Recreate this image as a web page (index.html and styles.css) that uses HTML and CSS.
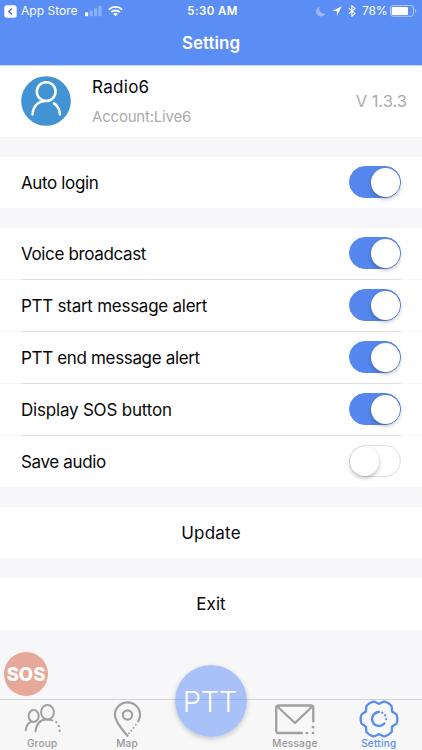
FILE: index.html
```html
<!DOCTYPE html>
<html lang="en">
<head>
<meta charset="utf-8">
<meta name="viewport" content="width=device-width, initial-scale=1">
<title>Setting</title>
<link rel="stylesheet" href="styles.css">
</head>
<body>
<div class="app">
  <header class="header">
    <div class="status">
      <div class="status-left">
        <svg width="13" height="13" viewBox="0 0 13 13"><rect x=".3" y=".3" width="12.4" height="12.4" rx="2.6" fill="#fff"/><path d="M7.8 3.5 4.8 6.5l3 3" fill="none" stroke="#4a73c6" stroke-width="1.4"/></svg>
        <span class="back">App Store</span>
        <svg class="signal" width="17" height="12" viewBox="0 0 17 12" fill="#fff"><rect y="7.3" width="3.2" height="4" rx=".8"/><g opacity=".3"><rect x="4.5" y="5.4" width="3.2" height="5.9" rx=".8"/><rect x="9" y="3.3" width="3.2" height="8" rx=".8"/><rect x="13.4" y=".9" width="3.2" height="10.4" rx=".8"/></g></svg>
        <svg class="wifi" width="15" height="12" viewBox="0 0 15 12" fill="none" stroke="#fff" stroke-width="1.9"><path d="M.8 4.6a9.5 9.5 0 0 1 13.4 0M3.2 7.2a6.1 6.1 0 0 1 8.6 0"/><path d="M7.5 11.2 5.2 8.9a3.2 3.2 0 0 1 4.6 0Z" fill="#fff" stroke="none"/></svg>
      </div>
      <span class="time">5:30 AM</span>
      <div class="status-right">
        <svg width="10" height="11" viewBox="0 0 10 11"><path d="M3.5.8A4.9 4.9 0 1 0 9.4 7.4 5 5 0 0 1 3.5.8Z" fill="#fff" opacity=".38"/></svg>
        <svg class="arrow" width="10" height="10" viewBox="0 0 10 10"><path d="M9.7.3.3 4.9h4.6v4.8Z" fill="#fff"/></svg>
        <svg class="bt" width="8" height="12" viewBox="0 0 8 12"><path d="M.8 3.2 7 8.6 3.9 11.2V.8L7 3.4.8 8.8" fill="none" stroke="#fff" stroke-width="1.1"/></svg>
        <span class="pct">78%</span>
        <svg class="battery" width="27" height="12" viewBox="0 0 27 12"><rect x=".5" y=".5" width="23" height="10.8" rx="2.6" fill="none" stroke="#fff" opacity=".5"/><rect x="1.7" y="1.9" width="16.3" height="8" rx="1" fill="#fff"/><path d="M25 4.1q1.5.6 1.5 1.8T25 7.7Z" fill="#fff" opacity=".45"/></svg>
      </div>
    </div>
    <h1 class="title">Setting</h1>
  </header>

  <main class="content">
    <section class="profile">
      <svg class="avatar" width="50" height="50" viewBox="0 0 50 50"><circle cx="25" cy="25" r="24.8" fill="#4293d3"/><g fill="none" stroke="#fff" stroke-width="2.5" stroke-linecap="round"><circle cx="25.2" cy="15.6" r="9.4"/><path d="M11.5 38.4C12 31.5 16 25.5 23.5 24.9M33 27.4c3.7 2.4 5.6 6 6 11"/></g></svg>
      <div class="who"><div class="name">Radio6</div><div class="account">Account:Live6</div></div>
      <span class="version">V 1.3.3</span>
    </section>

    <section class="group">
      <div class="row single"><span>Auto login</span><span class="switch on"></span></div>
    </section>

    <section class="group list">
      <div class="row"><span>Voice broadcast</span><span class="switch on"></span></div>
      <div class="row"><span class="start">PTT start message alert</span><span class="switch on"></span></div>
      <div class="row"><span class="end">PTT end message alert</span><span class="switch on"></span></div>
      <div class="row"><span class="display">Display SOS button</span><span class="switch on"></span></div>
      <div class="row last"><span>Save audio</span><span class="switch"></span></div>
    </section>

    <section class="group action"><span class="update">Update</span></section>
    <section class="group action"><span class="exit">Exit</span></section>
  </main>

  <div class="sos"><span>SOS</span></div>

  <nav class="tabs">
    <div class="tab">
      <svg width="38" height="34" viewBox="0 0 38 34" fill="none" stroke="#a0a0a1" stroke-width="2" stroke-linecap="round"><ellipse cx="10.7" cy="12" rx="5" ry="6"/><ellipse cx="24.5" cy="8.2" rx="6.4" ry="7.2"/><path d="M2.8 26.3c.2-3.7 1.6-6.4 4.7-8.2M12.6 27.3c.3-6.6 4.5-11.7 10.6-11.7 2.5 0 4.1.2 6 .8"/><path d="M33.3 18.2v.1M35.8 22v.1M36.7 26.7v.1" stroke-width="2.3"/></svg>
      <span>Group</span>
    </div>
    <div class="tab map">
      <svg width="29" height="37" viewBox="0 0 30 38" fill="none" stroke="#a0a0a1" stroke-width="2.3" stroke-linecap="round"><path d="M15 36C10.5 30.5 2 22 2 14.2a13 13 0 0 1 26 0c0 2.6-.8 4.7-2 6.7"/><circle cx="15" cy="14.4" r="4.8"/><path d="M23.6 24.3v.1M21.3 27.4v.1M18.8 30.5v.1M16.4 33.4v.1" stroke-width="1.9"/></svg>
      <span>Map</span>
    </div>
    <div class="tab"></div>
    <div class="tab message">
      <svg width="42" height="34" viewBox="0 0 42 34" fill="none" stroke="#a0a0a1" stroke-width="2.3" stroke-linecap="round" stroke-linejoin="round"><path d="M28 30H4.7Q2.2 30 2.2 27.5V5Q2.2 2.5 4.7 2.5h32.1Q39.3 2.5 39.3 5v13.5M3.3 3.5 21 20 38.3 3.5"/><path d="M39 24v.1M32.8 30h.1M39 30h.1" stroke-width="2.7"/></svg>
      <span>Message</span>
    </div>
    <div class="tab active">
      <svg width="40" height="38" viewBox="-20 -19 40 38" fill="none" stroke="#5a8cf0" stroke-width="2.3" stroke-linecap="round">
        <defs><path id="lobe" d="M13.25-7.65C14.35-5.75 17-6 17.8-3.8Q18.9 0 17.8 3.8C17 6 14.35 5.75 13.25 7.65"/></defs>
        <use href="#lobe"/><use href="#lobe" transform="rotate(60)"/><use href="#lobe" transform="rotate(120)"/><use href="#lobe" transform="rotate(180)"/><use href="#lobe" transform="rotate(240)"/><use href="#lobe" transform="rotate(300)"/>
        <path d="M0-7a7 7 0 1 0 5.4 11.5"/><path d="M3.3-6.4v.1M6.2-3.8v.1M7.2.1v.1" stroke-width="2.2"/>
      </svg>
      <span>Setting</span>
    </div>
  </nav>
  <div class="ptt"><span>PTT</span></div>
</div>
</body>
</html>
```
FILE: styles.css
```css
* { box-sizing: border-box; }
body { margin: 0; font-family: Inter, "Liberation Sans", sans-serif; color: #080808; }
svg { display: block; flex: none; }
.app { position: relative; width: 422px; height: 750px; display: flex; flex-direction: column; overflow: hidden; background: #f7f7fa; }
.header { height: 66px; flex: none; background: #5b8ef5; border-bottom: 1px solid #c3d5fc; color: #fff; }
.status { height: 22px; display: grid; grid-template-columns: 1fr auto 1fr; align-items: center; padding: 0 5px 0 4px; font-size: 12px; line-height: 22px; }
.status-left, .status-right { display: flex; align-items: center; }
.status-right { justify-content: flex-end; }
.back { margin-left: 4px; width: 58px; white-space: nowrap; letter-spacing: .02px; }
.signal { margin-left: 6px; margin-top: -1px; }
.wifi { margin-left: 6px; margin-top: -1px; }
.time { font-weight: 600; font-size: 11.5px; letter-spacing: .4px; padding-left: 4px; }
.arrow { margin-left: 6px; }
.bt { margin-left: 6px; }
.pct { margin-left: 6px; width: 25px; white-space: nowrap; letter-spacing: -.15px; }
.battery { margin-left: 3px; margin-top: -1px; }
.title { margin: 0; padding-top: 9px; text-align: center; font-size: 17px; line-height: 24px; font-weight: 600; letter-spacing: 0; }
.content { display: flex; flex-direction: column; gap: 20px; font-size: 17px; }
.profile { height: 71px; display: flex; align-items: center; padding: 0 15px 2px 21px; background: #fff; }
.who { margin-left: 21px; flex: 1; padding-top: 1px; }
.name { line-height: 24px; letter-spacing: .3px; }
.account { margin-top: 7px; font-size: 15px; line-height: 22px; letter-spacing: -.2px; color: #ababab; }
.version { color: #aaa; font-size: 16.5px; padding-top: 1px; }
.group { background: #fff; flex: none; }
.row { position: relative; height: 52px; display: flex; align-items: center; justify-content: space-between; padding: 0 21px; letter-spacing: -.36px; }
.row.single { height: 51.3px; }
.row.last { height: 50.7px; }
.start { letter-spacing: -.26px; }
.end { letter-spacing: -.34px; }
.display { letter-spacing: -.2px; }
.list .row:not(:last-child)::after { content: ""; position: absolute; left: 0; right: 0; bottom: 0; height: 1px; background: linear-gradient(to right, #f7f7f7 21px, #dedede 21px, #dedede 401px, #f7f7f7 401px); }
.switch { width: 52px; height: 32px; border-radius: 16px; padding: 1.5px; border: 1.5px solid #dfdfdf; background: #fff; margin-top: -2px; }
.switch::before { content: ""; display: block; width: 29px; height: 29px; margin: -.5px 0 0 -1.5px; border-radius: 50%; background: #fff; box-shadow: 0 2px 4px rgba(0,0,0,.27); }
.switch.on { background: #5687ef; border-color: #5687ef; }
.switch.on::before { margin-left: 19.5px; }
.action { height: 51.3px; display: flex; align-items: center; justify-content: center; }
.update { letter-spacing: .2px; }
.exit { letter-spacing: .1px; }
.sos { position: absolute; left: 4px; top: 652px; width: 44px; height: 44px; border-radius: 50%; background: #e6a898; color: #fff; display: flex; align-items: center; justify-content: center; font-size: 18.5px; font-weight: 800; }
.tabs { margin-top: auto; height: 51px; flex: none; display: grid; grid-template-columns: repeat(5, 1fr); border-top: 1px solid #d3d3d5; background: #f7f7f8; color: #969697; font-size: 10px; font-weight: 500; }
.tab { height: 50px; display: flex; flex-direction: column; align-items: center; line-height: 13px; letter-spacing: .25px; }
.tab svg { margin-top: 4px; margin-bottom: -1px; }
.tab.message svg { margin-top: 3px; margin-bottom: 0; }
.tab.map svg { margin-top: 1px; margin-bottom: -1px; }
.tab.active svg { margin-top: 0; margin-bottom: -1px; }
.tab.map { padding-left: 1px; }
.tab.message { padding-right: 1px; }
.tab.active { padding-right: 2px; color: #5a8cf0; }
.ptt { position: absolute; left: 175px; top: 665px; width: 72px; height: 72px; border-radius: 50%; background: linear-gradient(#a8c1f8 34px, #97aee0 34px, #97aee0 35px, #a8c1f8 35px); box-shadow: 0 2px 5px rgba(0,0,0,.2); color: #fff; display: flex; align-items: center; justify-content: center; padding-right: 2px; font-size: 29px; font-weight: 300; letter-spacing: -.2px; }
```
